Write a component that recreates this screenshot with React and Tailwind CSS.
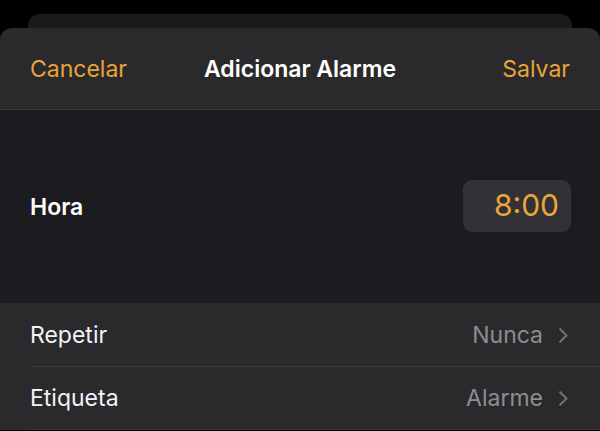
const font = { fontFamily: '"Inter", "Liberation Sans", sans-serif' };

function Chevron() {
  return (
    <svg width="9" height="15" viewBox="0 0 9 15" fill="none" className="text-[#6e6e73]">
      <path d="M1.2 1.2 L7.5 7.5 L1.2 13.8" stroke="currentColor" strokeWidth="2.2" strokeLinecap="round" strokeLinejoin="round" />
    </svg>
  );
}

function Row({ label, value }) {
  return (
    <div className="relative flex h-[63px] items-center justify-between pl-[30px] pr-[32px]">
      <span className="text-[23px] text-[#f2f2f7]">{label}</span>
      <span className="flex items-center gap-[16px]">
        <span className="text-[23px] text-[#8d8d93]">{value}</span>
        <Chevron />
      </span>
      <div className="absolute bottom-0 left-[30px] right-0 h-px bg-[#3a3a3d]" />
    </div>
  );
}

export default function App() {
  return (
    <div className="h-[431px] w-[600px] overflow-hidden bg-black" style={font}>
      <div className="mx-[28px] mt-[14px] h-[30px] rounded-t-[12px] bg-[#1a1a1c]" />
      <div className="-mt-[16px] rounded-t-[12px] bg-[#2a2a2c]">
        <div className="grid h-[82px] grid-cols-[1fr_auto_1fr] items-center border-b border-[#3a3a3c] px-[30px] pt-[2px]">
          <button type="button" className="justify-self-start text-[23px] text-[#eba33a]">Cancelar</button>
          <h1 className="text-[23px] font-semibold text-white">Adicionar Alarme</h1>
          <button type="button" className="justify-self-end text-[23px] text-[#eba33a]">Salvar</button>
        </div>
        <div className="flex h-[193px] items-center justify-between bg-[#1c1b1f] pb-[2px] pl-[30px] pr-[29px]">
          <span className="pt-[4px] text-[23px] font-semibold text-white">Hora</span>
          <div className="flex h-[52px] w-[108px] items-center justify-end rounded-[9px] bg-[#323135] pr-[12px]">
            <span className="text-[30px] text-[#eda53c]">8:00</span>
          </div>
        </div>
        <div className="bg-[#2a2a2c] pt-[1px]">
          <Row label="Repetir" value="Nunca" />
          <Row label="Etiqueta" value="Alarme" />
        </div>
      </div>
    </div>
  );
}
